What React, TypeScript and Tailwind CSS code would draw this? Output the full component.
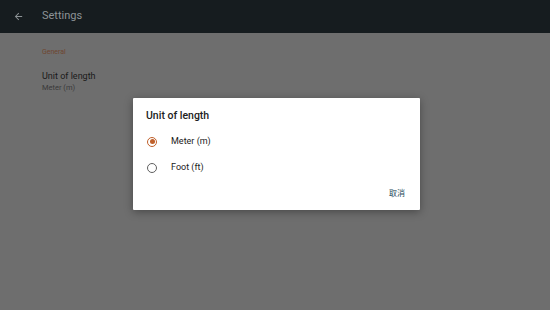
import React from "react";

const options = ["Meter (m)", "Foot (ft)"];

export default function App() {
  return (
    <div
      className="relative w-[550px] h-[310px] overflow-hidden bg-[#6e6e6e]"
      style={{ fontFamily: "Roboto, 'Noto Sans CJK SC', sans-serif" }}
    >
      <div className="h-[33px] bg-[#161c1f] flex items-center">
        <svg className="ml-[13px] w-[11px] h-[11px]" viewBox="0 0 24 24" fill="#8d9396">
          <path d="M20 11H7.83l5.59-5.59L12 4l-8 8 8 8 1.41-1.41L7.83 13H20v-2z" />
        </svg>
        <span className="ml-[18px] text-[11px] text-[#8d9396]">Settings</span>
      </div>
      <div className="pl-[42px] pt-[16px]">
        <div className="text-[7px] text-[#6e4630] leading-none">General</div>
        <div className="mt-[16px] text-[9px] text-[#1a1a1a] leading-none">Unit of length</div>
        <div className="mt-[3px] text-[7.5px] text-[#3a3a3a] leading-none">Meter (m)</div>
      </div>

      <div className="absolute left-[133px] top-[98px] w-[287px] h-[112px] bg-white rounded-[1px] shadow-[0_2px_8px_rgba(0,0,0,0.35)] flex flex-col">
        <div className="pl-[13px] pt-[13px] text-[10.5px] font-medium text-[#212121] leading-none">
          Unit of length
        </div>
        <div className="mt-[7px] flex flex-col">
          {options.map((o, i) => (
            <div key={o} className="h-[26px] flex items-center pl-[14px]">
              <div
                className={`w-[10px] h-[10px] rounded-full border-[1.3px] flex items-center justify-center ${
                  i === 0 ? "border-[#c0602a]" : "border-[#5f5f5f]"
                }`}
              >
                {i === 0 && <div className="w-[5px] h-[5px] rounded-full bg-[#c0602a]" />}
              </div>
              <span className="ml-[14px] text-[9px] text-[#212121]">{o}</span>
            </div>
          ))}
        </div>
        <div className="mt-auto mb-[10px] mr-[15px] self-end text-[8px] text-[#1f4a5a]">取消</div>
      </div>
    </div>
  );
}
